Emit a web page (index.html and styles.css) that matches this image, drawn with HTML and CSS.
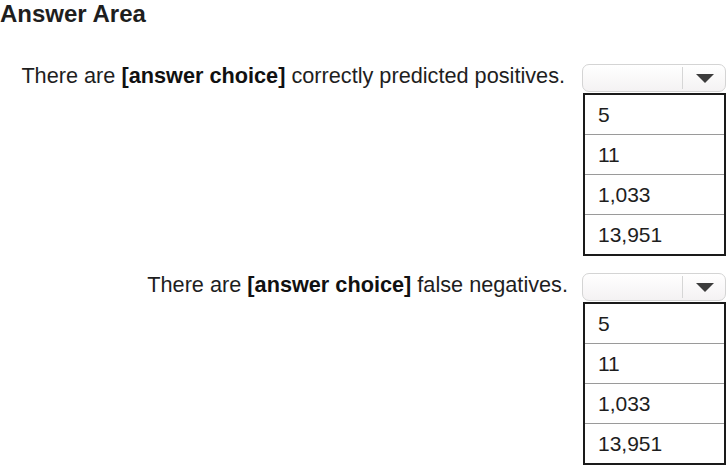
FILE: index.html
```html
<!DOCTYPE html>
<html lang="en">
<head>
    <meta charset="UTF-8">
    <title>Answer Area</title>
    <link rel="stylesheet" href="styles.css">
</head>
<body>
    <h1>Answer Area</h1>

    <div class="question first">
        <p class="statement">There are <b>[answer choice]</b> correctly predicted positives.</p>
        <div class="picker">
            <div class="select"><span class="arrow"></span></div>
            <ul class="options">
                <li>5</li>
                <li>11</li>
                <li>1,033</li>
                <li>13,951</li>
            </ul>
        </div>
    </div>

    <div class="question">
        <p class="statement">There are <b>[answer choice]</b> false negatives.</p>
        <div class="picker">
            <div class="select"><span class="arrow"></span></div>
            <ul class="options">
                <li>5</li>
                <li>11</li>
                <li>1,033</li>
                <li>13,951</li>
            </ul>
        </div>
    </div>
</body>
</html>
```

FILE: styles.css
```css
body { font-family: "Liberation Sans", Arial, sans-serif; color: #1e1e1e; background: #ffffff; margin: 0; padding: 0 2px 0 0; overflow: hidden; }
h1 { font-size: 24px; font-weight: bold; line-height: 28px; margin: 0 0 36px 0; }
.question { display: flex; justify-content: flex-end; align-items: flex-start; gap: 14px; margin-bottom: 17px; }
.question.first { gap: 17px; }
.statement { margin: 0; font-size: 21.7px; line-height: 24px; }
.statement b { color: #111; }
.picker { width: 144px; }
.select { height: 26px; border: 1px solid #d4d4d4; border-radius: 7px; background: linear-gradient(#ffffff, #f4f2f3); position: relative; }
.select::after { content: ""; position: absolute; top: 2px; bottom: 2px; right: 42px; border-left: 1px solid #d6d6d6; }
.arrow { position: absolute; right: 11px; top: 9px; width: 0; height: 0; border-left: 9px solid transparent; border-right: 9px solid transparent; border-top: 9px solid #3c3c3c; }
.options { list-style: none; margin: 1px 0 0 1px; padding: 0; border: 2px solid #1a1a1a; }
.options li { font-size: 21px; height: 39px; line-height: 40px; padding-left: 13px; border-top: 1px solid #9a9a9a; }
.options li:first-child { border-top: none; }
```
